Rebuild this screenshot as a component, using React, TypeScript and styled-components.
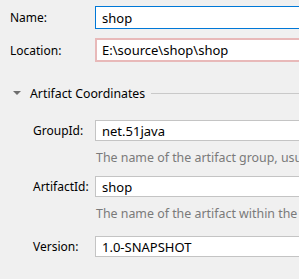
import styled, { createGlobalStyle } from "styled-components";

const Global = createGlobalStyle`
  html, body {
    margin: 0;
    padding: 0;
    background: #f0f0f0;
    overflow: hidden;
  }
  body {
    font-family: "Noto Sans", "Liberation Sans", sans-serif;
    font-size: 12px;
    color: #000;
  }
`;

const Panel = styled.div`
  width: 299px;
  overflow: hidden;
  padding: 6px 0 0 10px;
  box-sizing: border-box;
  display: flex;
  flex-direction: column;
`;

const Row = styled.div<{ $indent?: number; $gap?: number }>`
  display: flex;
  align-items: center;
  padding-left: ${(p) => p.$indent ?? 0}px;
  margin-top: ${(p) => p.$gap ?? 0}px;
`;

const Label = styled.label<{ $width: number }>`
  width: ${(p) => p.$width}px;
  flex-shrink: 0;
  font-size: 12px;
`;

const Field = styled.div<{ $state?: "focus" | "error"; $height?: number }>`
  flex: 1;
  box-sizing: border-box;
  height: ${(p) => p.$height ?? 21}px;
  background: #fff;
  border: ${(p) =>
    p.$state === "focus"
      ? "1px solid #0078d7"
      : p.$state === "error"
      ? "2px solid #e8b9b9"
      : "1px solid #c4c4c4"};
  border-right: none;
  display: flex;
  align-items: center;
  padding-left: ${(p) => (p.$state === "error" ? 5 : 6)}px;
  font-size: 13px;
`;

const Hint = styled.div`
  margin-top: 8px;
  padding-left: 86px;
  color: #7a7a7a;
  font-size: 12.4px;
  white-space: nowrap;
  overflow: hidden;
`;

const Section = styled.div`
  display: flex;
  align-items: center;
  margin-top: 22px;
  padding-left: 3px;
  height: 18px;
`;

const Arrow = styled.span`
  width: 0;
  height: 0;
  border-left: 4px solid transparent;
  border-right: 4px solid transparent;
  border-top: 4px solid #6e6e6e;
  margin-right: 9px;
`;

const SectionTitle = styled.span`
  font-size: 12.3px;
  white-space: nowrap;
`;

const Rule = styled.div`
  flex: 1;
  height: 1px;
  background: #c9c9c9;
  margin-left: 6px;
  margin-top: 1px;
`;

export default function App() {
  return (
    <Panel>
      <Global />
      <Row>
        <Label $width={85}>Name:</Label>
        <Field $state="focus" $height={23}>shop</Field>
      </Row>
      <Row $gap={9}>
        <Label $width={85}>Location:</Label>
        <Field $state="error" $height={24}>E:\source\shop\shop</Field>
      </Row>
      <Section>
        <Arrow />
        <SectionTitle>Artifact Coordinates</SectionTitle>
        <Rule />
      </Section>
      <Row $indent={23} $gap={18}>
        <Label $width={62}>GroupId:</Label>
        <Field>net.51java</Field>
      </Row>
      <Hint>The name of the artifact group, usually a company domain</Hint>
      <Row $indent={23} $gap={10}>
        <Label $width={62}>ArtifactId:</Label>
        <Field>shop</Field>
      </Row>
      <Hint>The name of the artifact within the group</Hint>
      <Row $indent={23} $gap={14}>
        <Label $width={62}>Version:</Label>
        <Field>1.0-SNAPSHOT</Field>
      </Row>
    </Panel>
  );
}
